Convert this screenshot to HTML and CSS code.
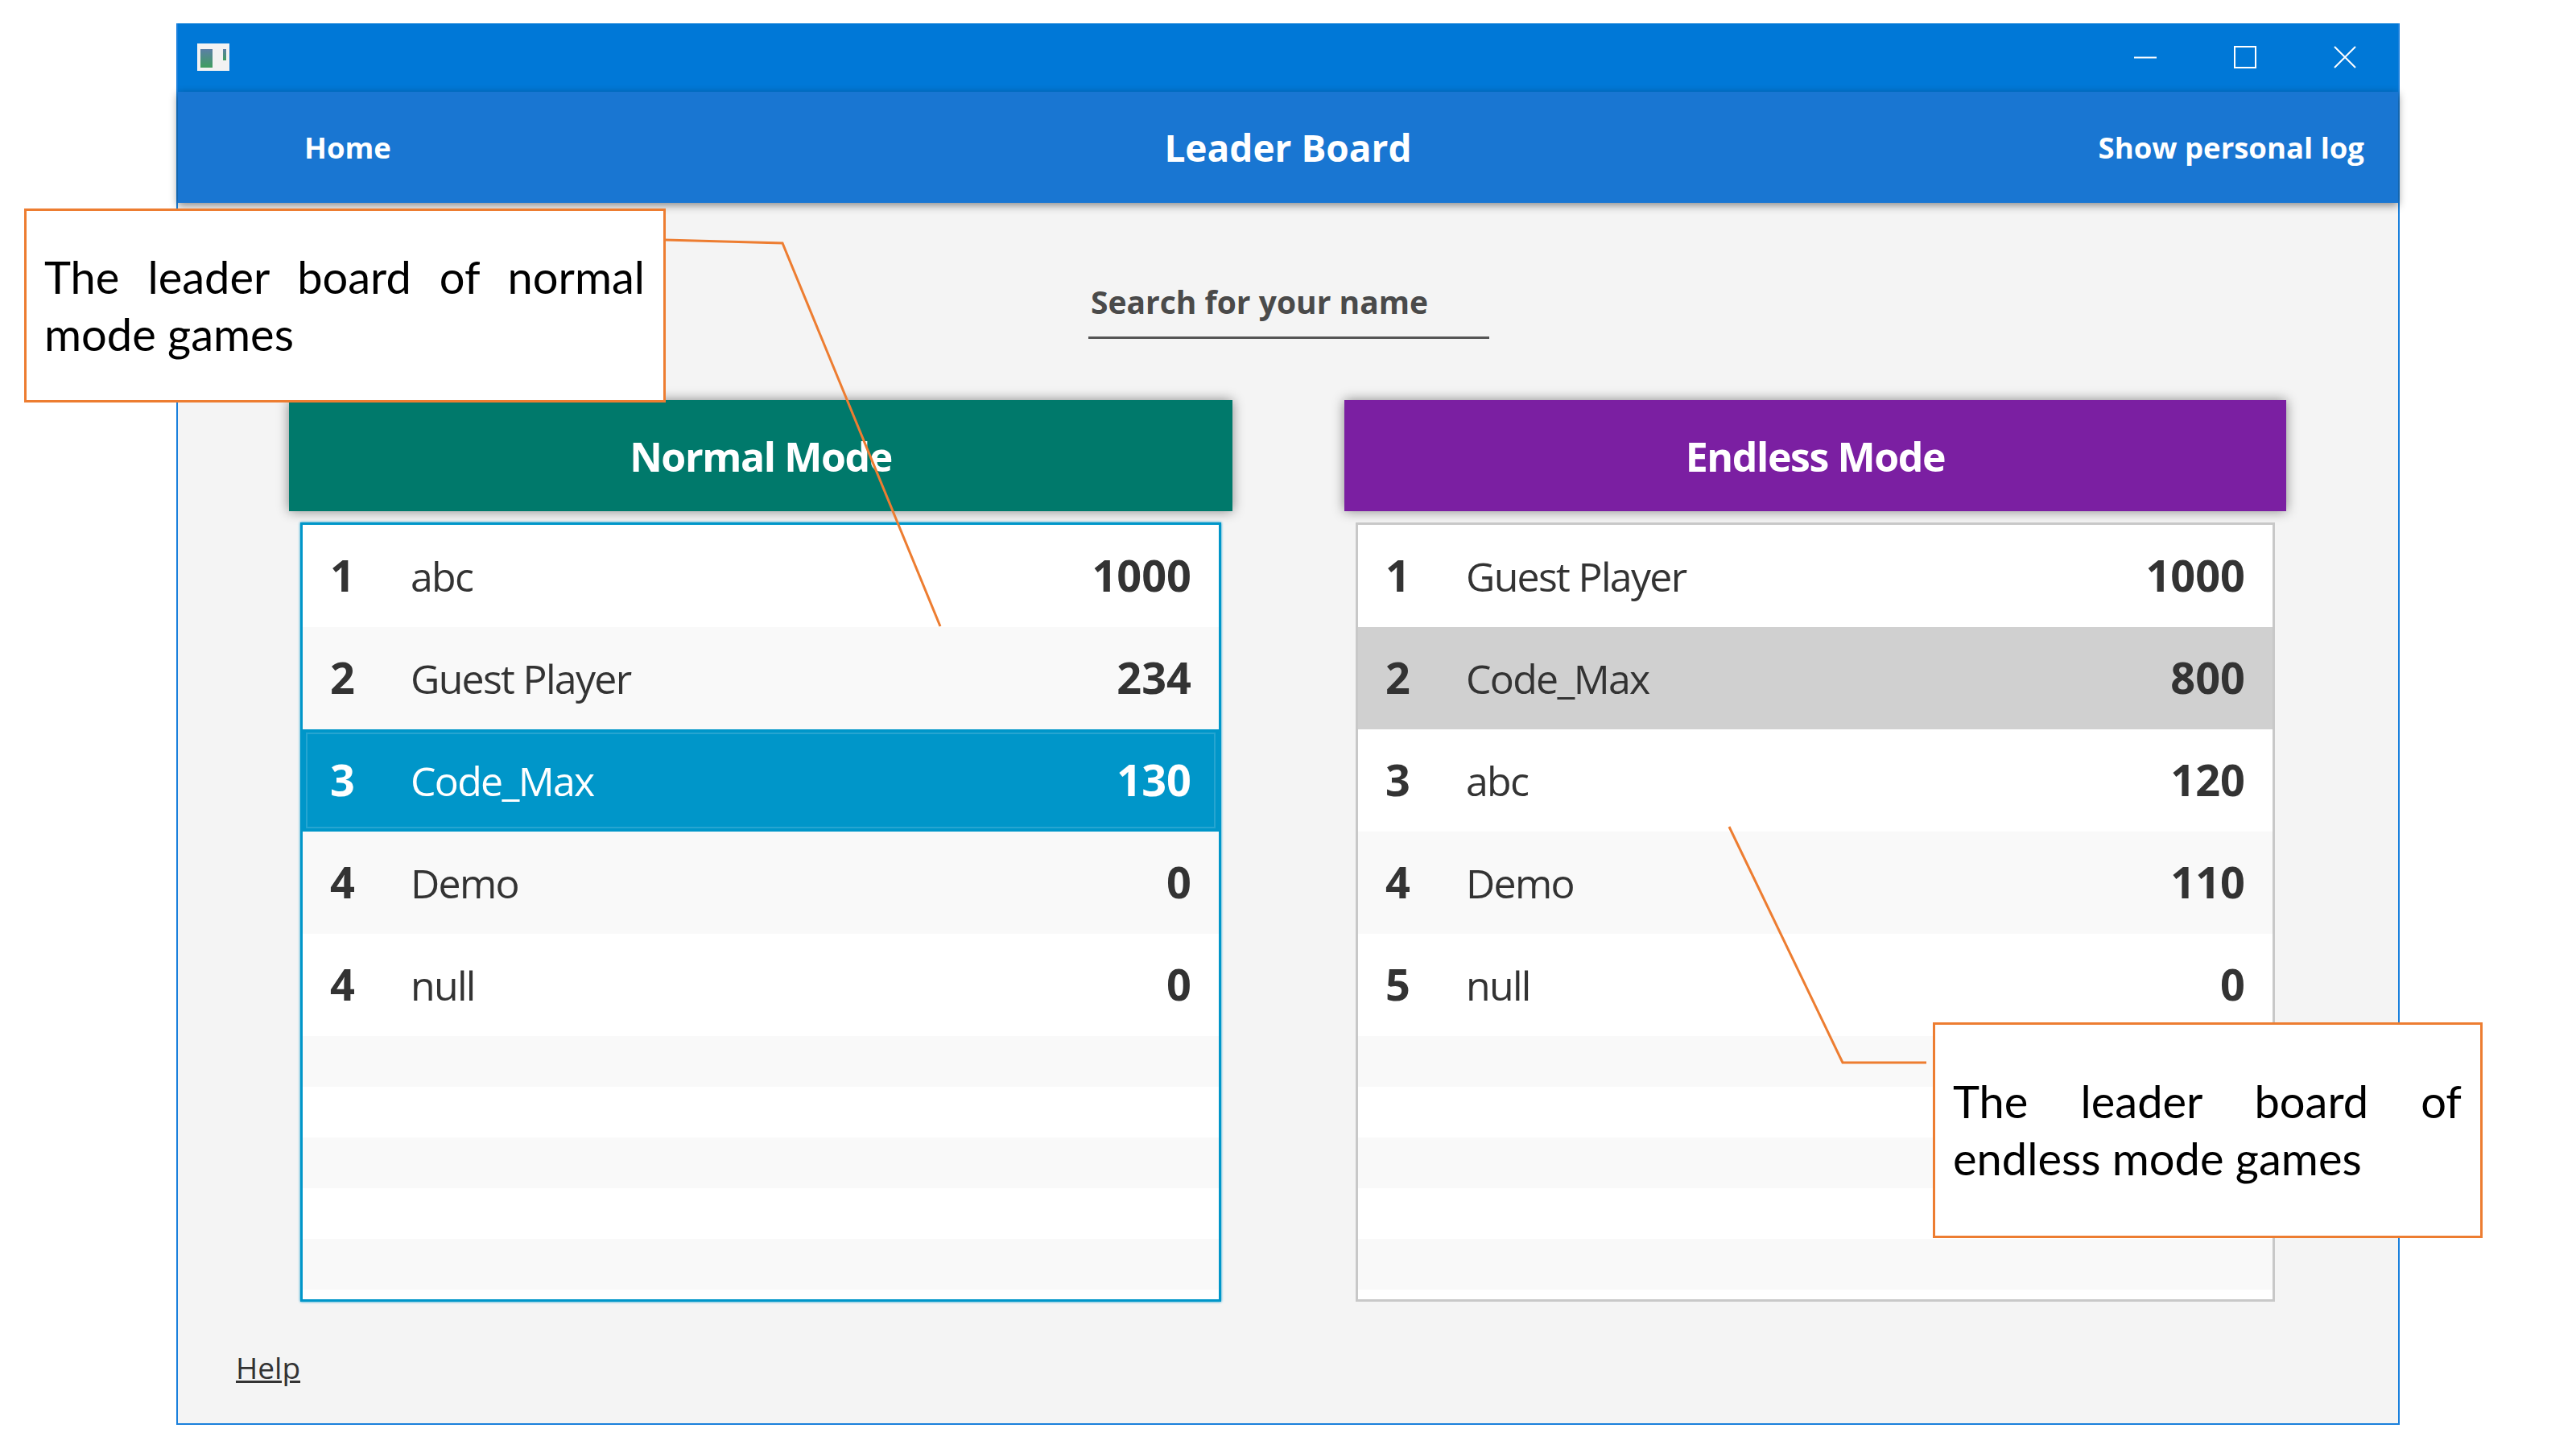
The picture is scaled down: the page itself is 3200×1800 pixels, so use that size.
FILE: index.html
```html
<!DOCTYPE html>
<html lang="en">
<head>
    <meta charset="UTF-8">
    <title>Leader Board</title>
    <link rel="stylesheet" href="styles.css">
</head>
<body>

<div class="window">
    <div class="titlebar">
        <svg class="app-icon" width="40" height="34" viewBox="0 0 40 34">
            <defs>
                <linearGradient id="pane" x1="0" y1="0" x2="0" y2="1">
                    <stop offset="0" stop-color="#5b7fa6"/>
                    <stop offset="1" stop-color="#3f9e5f"/>
                </linearGradient>
            </defs>
            <rect width="40" height="34" fill="#f2f2f2"/>
            <rect x="4" y="7" width="15" height="23" fill="url(#pane)"/>
            <rect x="32" y="7" width="4" height="14" fill="url(#pane)"/>
        </svg>
        <div class="window-controls">
            <svg width="28" height="28" viewBox="0 0 28 28"><path d="M0 14.5H28" stroke="#fff" stroke-width="2" fill="none"/></svg>
            <svg width="28" height="28" viewBox="0 0 28 28"><rect x="1" y="1" width="26" height="26" stroke="#fff" stroke-width="2" fill="none"/></svg>
            <svg width="28" height="28" viewBox="0 0 28 28"><path d="M1 1L27 27M27 1L1 27" stroke="#fff" stroke-width="2" fill="none"/></svg>
        </div>
    </div>

    <div class="header">
        <a class="header-link home-link">Home</a>
        <h1 class="header-title">Leader Board</h1>
        <a class="header-link log-link">Show personal log</a>
    </div>

    <div class="content">
        <div class="search">Search for your name</div>

        <div class="boards">
            <div class="board">
                <div class="board-title normal-title">Normal Mode</div>
                <div class="score-list focused">
                    <div class="row"><b>1</b><span>abc</span><b>1000</b></div>
                    <div class="row"><b>2</b><span>Guest Player</span><b>234</b></div>
                    <div class="row selected"><b>3</b><span>Code_Max</span><b>130</b></div>
                    <div class="row"><b>4</b><span>Demo</span><b>0</b></div>
                    <div class="row"><b>4</b><span>null</span><b>0</b></div>
                    <div class="row empty"></div>
                    <div class="row empty"></div>
                    <div class="row empty"></div>
                    <div class="row empty"></div>
                    <div class="row empty"></div>
                </div>
            </div>

            <div class="board board-endless">
                <div class="board-title endless-title">Endless Mode</div>
                <div class="score-list">
                    <div class="row"><b>1</b><span>Guest Player</span><b>1000</b></div>
                    <div class="row hovered"><b>2</b><span>Code_Max</span><b>800</b></div>
                    <div class="row"><b>3</b><span>abc</span><b>120</b></div>
                    <div class="row"><b>4</b><span>Demo</span><b>110</b></div>
                    <div class="row"><b>5</b><span>null</span><b>0</b></div>
                    <div class="row empty"></div>
                    <div class="row empty"></div>
                    <div class="row empty"></div>
                    <div class="row empty"></div>
                    <div class="row empty"></div>
                </div>
            </div>
        </div>

        <a class="help-link">Help</a>
    </div>
</div>

<!-- annotations on top of the screenshot -->
<svg class="leaders" width="3200" height="1800" viewBox="0 0 3200 1800">
    <polyline points="826,298 972,302 1168,778"/>
    <polyline points="2148,1027 2289,1320 2393,1320"/>
</svg>
<div class="callout callout-normal"><p>The leader board of normal mode games</p></div>
<div class="callout callout-endless"><p>The leader board of endless mode games</p></div>

</body>
</html>
```

FILE: styles.css
```css
html, body {
    margin: 0;
    height: 1800px;
    background-color: #fff;
}

body {
    position: relative;
    overflow: hidden;
    font-family: "Open Sans", sans-serif;
    color: #333;
}

.window {
    box-sizing: border-box;
    position: absolute;
    left: 219px;
    top: 29px;
    width: 2762px;
    height: 1741px;
    display: flex;
    flex-direction: column;
    background-color: #f4f4f4;
    border: 2px solid #1a80dc;
    border-top: none;
}

.titlebar {
    flex: none;
    height: 85px;
    display: flex;
    align-items: center;
    justify-content: space-between;
    padding: 0 52px 0 24px;
    background-color: #0078d7;
}

.app-icon {
    display: block;
    margin-top: -2px;
}

.window-controls {
    display: flex;
    gap: 96px;
    margin-top: -2px;
}

.window-controls svg {
    display: block;
}

.header {
    flex: none;
    height: 138px;
    display: grid;
    grid-template-columns: 1fr auto 1fr;
    align-items: center;
    background-color: #1976d2;
    color: #fff;
    box-shadow: 0 3px 10px rgba(0, 0, 0, 0.45);
    position: relative;
}

.header-link {
    font-size: 36.5px;
    font-weight: 700;
}

.home-link {
    padding-left: 157px;
}

.log-link {
    text-align: right;
    padding-right: 42px;
}

.header-title {
    margin: 0;
    font-size: 46px;
    font-weight: 700;
}

.content {
    flex: 1;
    display: flex;
    flex-direction: column;
    padding: 0 139px 0 138px;
}

.search {
    box-sizing: border-box;
    align-self: center;
    width: 498px;
    height: 169px;
    margin-left: 3px;
    padding: 96px 0 0 3px;
    font-size: 39px;
    font-weight: 700;
    color: #4a4a4a;
    line-height: 54px;
    position: relative;
}

.search::after {
    content: "";
    position: absolute;
    left: 0;
    right: 0;
    top: 166px;
    height: 3px;
    background-color: #555;
}

.boards {
    display: flex;
    justify-content: space-between;
    margin-top: 76px;
}

.board {
    width: 1172px;
}

.board-endless {
    width: 1170px;
}

.board-title {
    box-sizing: border-box;
    height: 138px;
    padding-top: 2px;
    display: flex;
    align-items: center;
    justify-content: center;
    font-size: 50px;
    letter-spacing: -1.4px;
    font-weight: 700;
    color: #fff;
    box-shadow: 0 0 14px rgba(0, 0, 0, 0.45);
}

.normal-title {
    background-color: #00796b;
}

.endless-title {
    background-color: #7b1fa2;
}

.score-list {
    box-sizing: border-box;
    height: 968px;
    margin: 14px 14px 0;
    overflow: hidden;
    background-color: #fff;
    border: 3px solid #c8c8c8;
}

.score-list.focused {
    border-color: #0096c9;
    box-shadow: 0 0 3px #0096c9;
}

.row {
    box-sizing: border-box;
    height: 127px;
    display: grid;
    grid-template-columns: 100px 1fr auto;
    align-items: center;
    padding: 0 34px;
    font-size: 50px;
    letter-spacing: -1.7px;
}

.row b {
    margin-top: -3px;
    font-size: 54px;
    letter-spacing: 0;
}

.row:nth-child(even) {
    background-color: #f9f9f9;
}

.row.empty {
    height: 63px;
}

.row.selected {
    background-color: #0096c9;
    color: #fff;
    outline: 2px solid rgba(255, 255, 255, 0.15);
    outline-offset: -6px;
}

.row.hovered {
    background-color: #d0d0d0;
}

.help-link {
    align-self: flex-start;
    margin: 56px 0 0 -66px;
    font-size: 37px;
    text-decoration: underline;
    color: #333;
}

.leaders {
    position: absolute;
    left: 0;
    top: 0;
    pointer-events: none;
}

.leaders polyline {
    fill: none;
    stroke: #ed7d31;
    stroke-width: 3;
}

.callout {
    box-sizing: border-box;
    position: absolute;
    display: flex;
    align-items: center;
    background-color: #fff;
    border: 3px solid #ed7d31;
    padding: 0 23px 2px 22px;
    font-family: Lato, sans-serif;
    font-size: 56px;
    line-height: 71px;
    color: #000;
}

.callout p {
    margin: 0;
    width: 100%;
    text-align: justify;
}

.callout-normal {
    left: 30px;
    top: 259px;
    width: 797px;
    height: 241px;
}

.callout-endless {
    left: 2401px;
    top: 1270px;
    width: 683px;
    height: 268px;
}
```
